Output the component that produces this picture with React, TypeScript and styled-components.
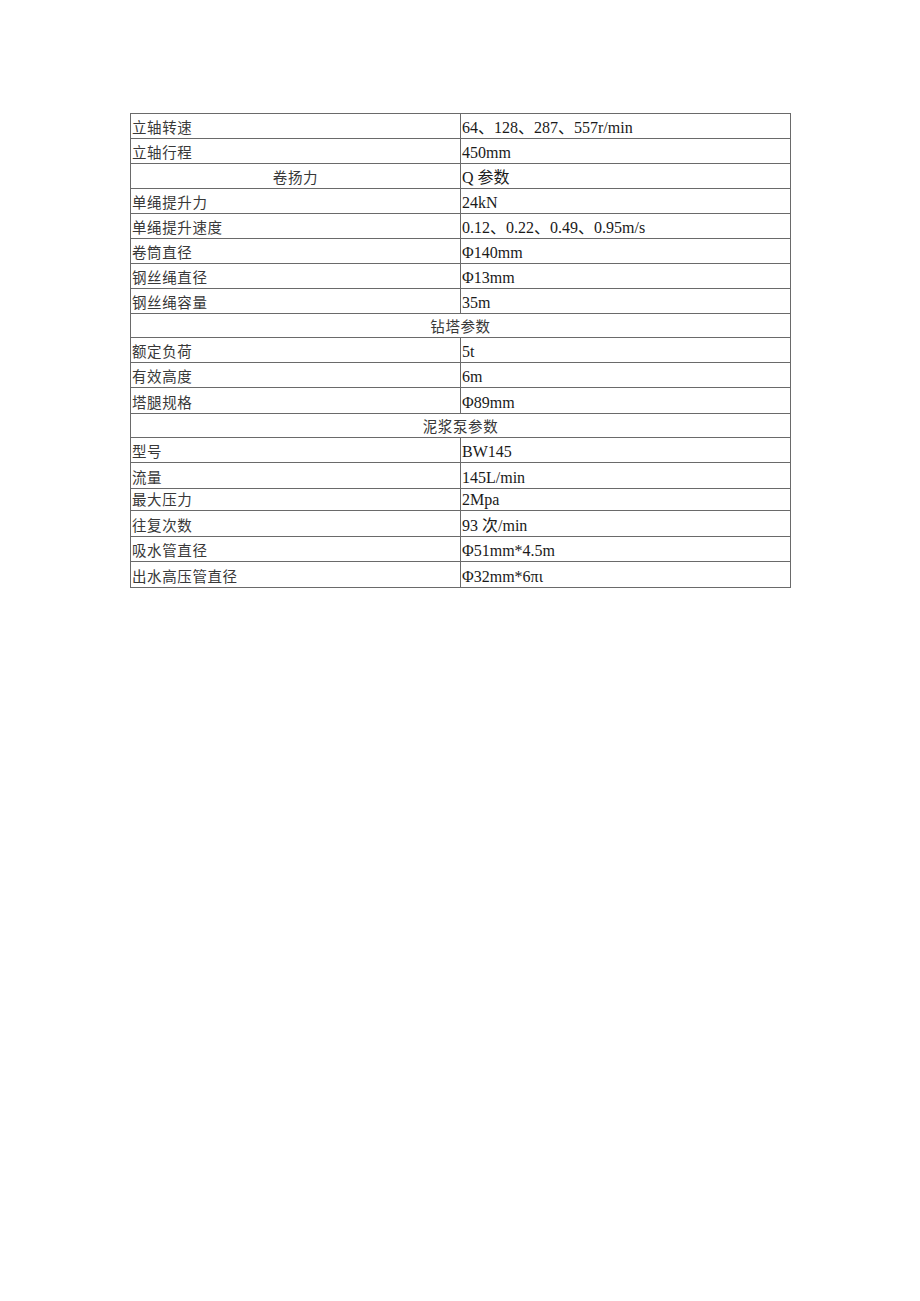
import React from 'react';
import styled, { createGlobalStyle } from 'styled-components';

const GlobalStyle = createGlobalStyle`
  html, body {
    margin: 0;
    padding: 0;
    background: #ffffff;
  }
`;

const Page = styled.div`
  width: 920px;
  min-height: 1301px;
  padding: 113px 0 0 130px;
  box-sizing: border-box;
  font-family: "Liberation Serif", "Noto Sans CJK SC", serif;
  color: #1a1a1a;
`;

const Table = styled.table`
  width: 660px;
  border-collapse: collapse;
  table-layout: fixed;
  font-size: 15px;
`;

const Row = styled.tr<{ $h?: number }>`
  height: ${(p) => p.$h ?? 25}px;
`;

const Cell = styled.td<{ $center?: boolean }>`
  border: 1px solid #6a6a6a;
  padding: 0 1px;
  line-height: 19px;
  vertical-align: bottom;
  text-align: ${(p) => (p.$center ? 'center' : 'left')};
  white-space: nowrap;
  overflow: hidden;
`;

const Label = styled.span`
  font-family: "Noto Sans CJK SC", sans-serif;
  font-size: 14.5px;
  color: #383838;
  letter-spacing: 0.6px;
`;

const Value = styled.span`
  font-family: "Liberation Serif", "Noto Sans CJK SC", serif;
  font-size: 16px;
  color: #1a1a1a;
`;

type Item =
  | { kind: 'pair'; label: string; value: string; h?: number }
  | { kind: 'head2'; label: string; value: string; h?: number }
  | { kind: 'span'; label: string; h?: number };

const rows: Item[] = [
  { kind: 'pair', label: '立轴转速', value: '64、128、287、557r/min' },
  { kind: 'pair', label: '立轴行程', value: '450mm' },
  { kind: 'head2', label: '卷扬力', value: 'Q 参数' },
  { kind: 'pair', label: '单绳提升力', value: '24kN' },
  { kind: 'pair', label: '单绳提升速度', value: '0.12、0.22、0.49、0.95m/s' },
  { kind: 'pair', label: '卷筒直径', value: 'Φ140mm' },
  { kind: 'pair', label: '钢丝绳直径', value: 'Φ13mm' },
  { kind: 'pair', label: '钢丝绳容量', value: '35m' },
  { kind: 'span', label: '钻塔参数', h: 24 },
  { kind: 'pair', label: '额定负荷', value: '5t' },
  { kind: 'pair', label: '有效高度', value: '6m' },
  { kind: 'pair', label: '塔腿规格', value: 'Φ89mm', h: 26 },
  { kind: 'span', label: '泥浆泵参数', h: 24 },
  { kind: 'pair', label: '型号', value: 'BW145' },
  { kind: 'pair', label: '流量', value: '145L/min', h: 26 },
  { kind: 'pair', label: '最大压力', value: '2Mpa', h: 22 },
  { kind: 'pair', label: '往复次数', value: '93 次/min', h: 26 },
  { kind: 'pair', label: '吸水管直径', value: 'Φ51mm*4.5m' },
  { kind: 'pair', label: '出水高压管直径', value: 'Φ32mm*6πι', h: 26 },
];

const App: React.FC = () => {
  return (
    <>
      <GlobalStyle />
      <Page>
        <Table>
          <colgroup>
            <col style={{ width: 330 }} />
            <col style={{ width: 330 }} />
          </colgroup>
          <tbody>
            {rows.map((r, i) => {
              if (r.kind === 'span') {
                return (
                  <Row key={i} $h={r.h}>
                    <Cell colSpan={2} $center>
                      <Label>{r.label}</Label>
                    </Cell>
                  </Row>
                );
              }
              return (
                <Row key={i} $h={r.h}>
                  <Cell $center={r.kind === 'head2'}>
                    <Label>{r.label}</Label>
                  </Cell>
                  <Cell>
                    <Value>{r.value}</Value>
                  </Cell>
                </Row>
              );
            })}
          </tbody>
        </Table>
      </Page>
    </>
  );
};

export default App;
